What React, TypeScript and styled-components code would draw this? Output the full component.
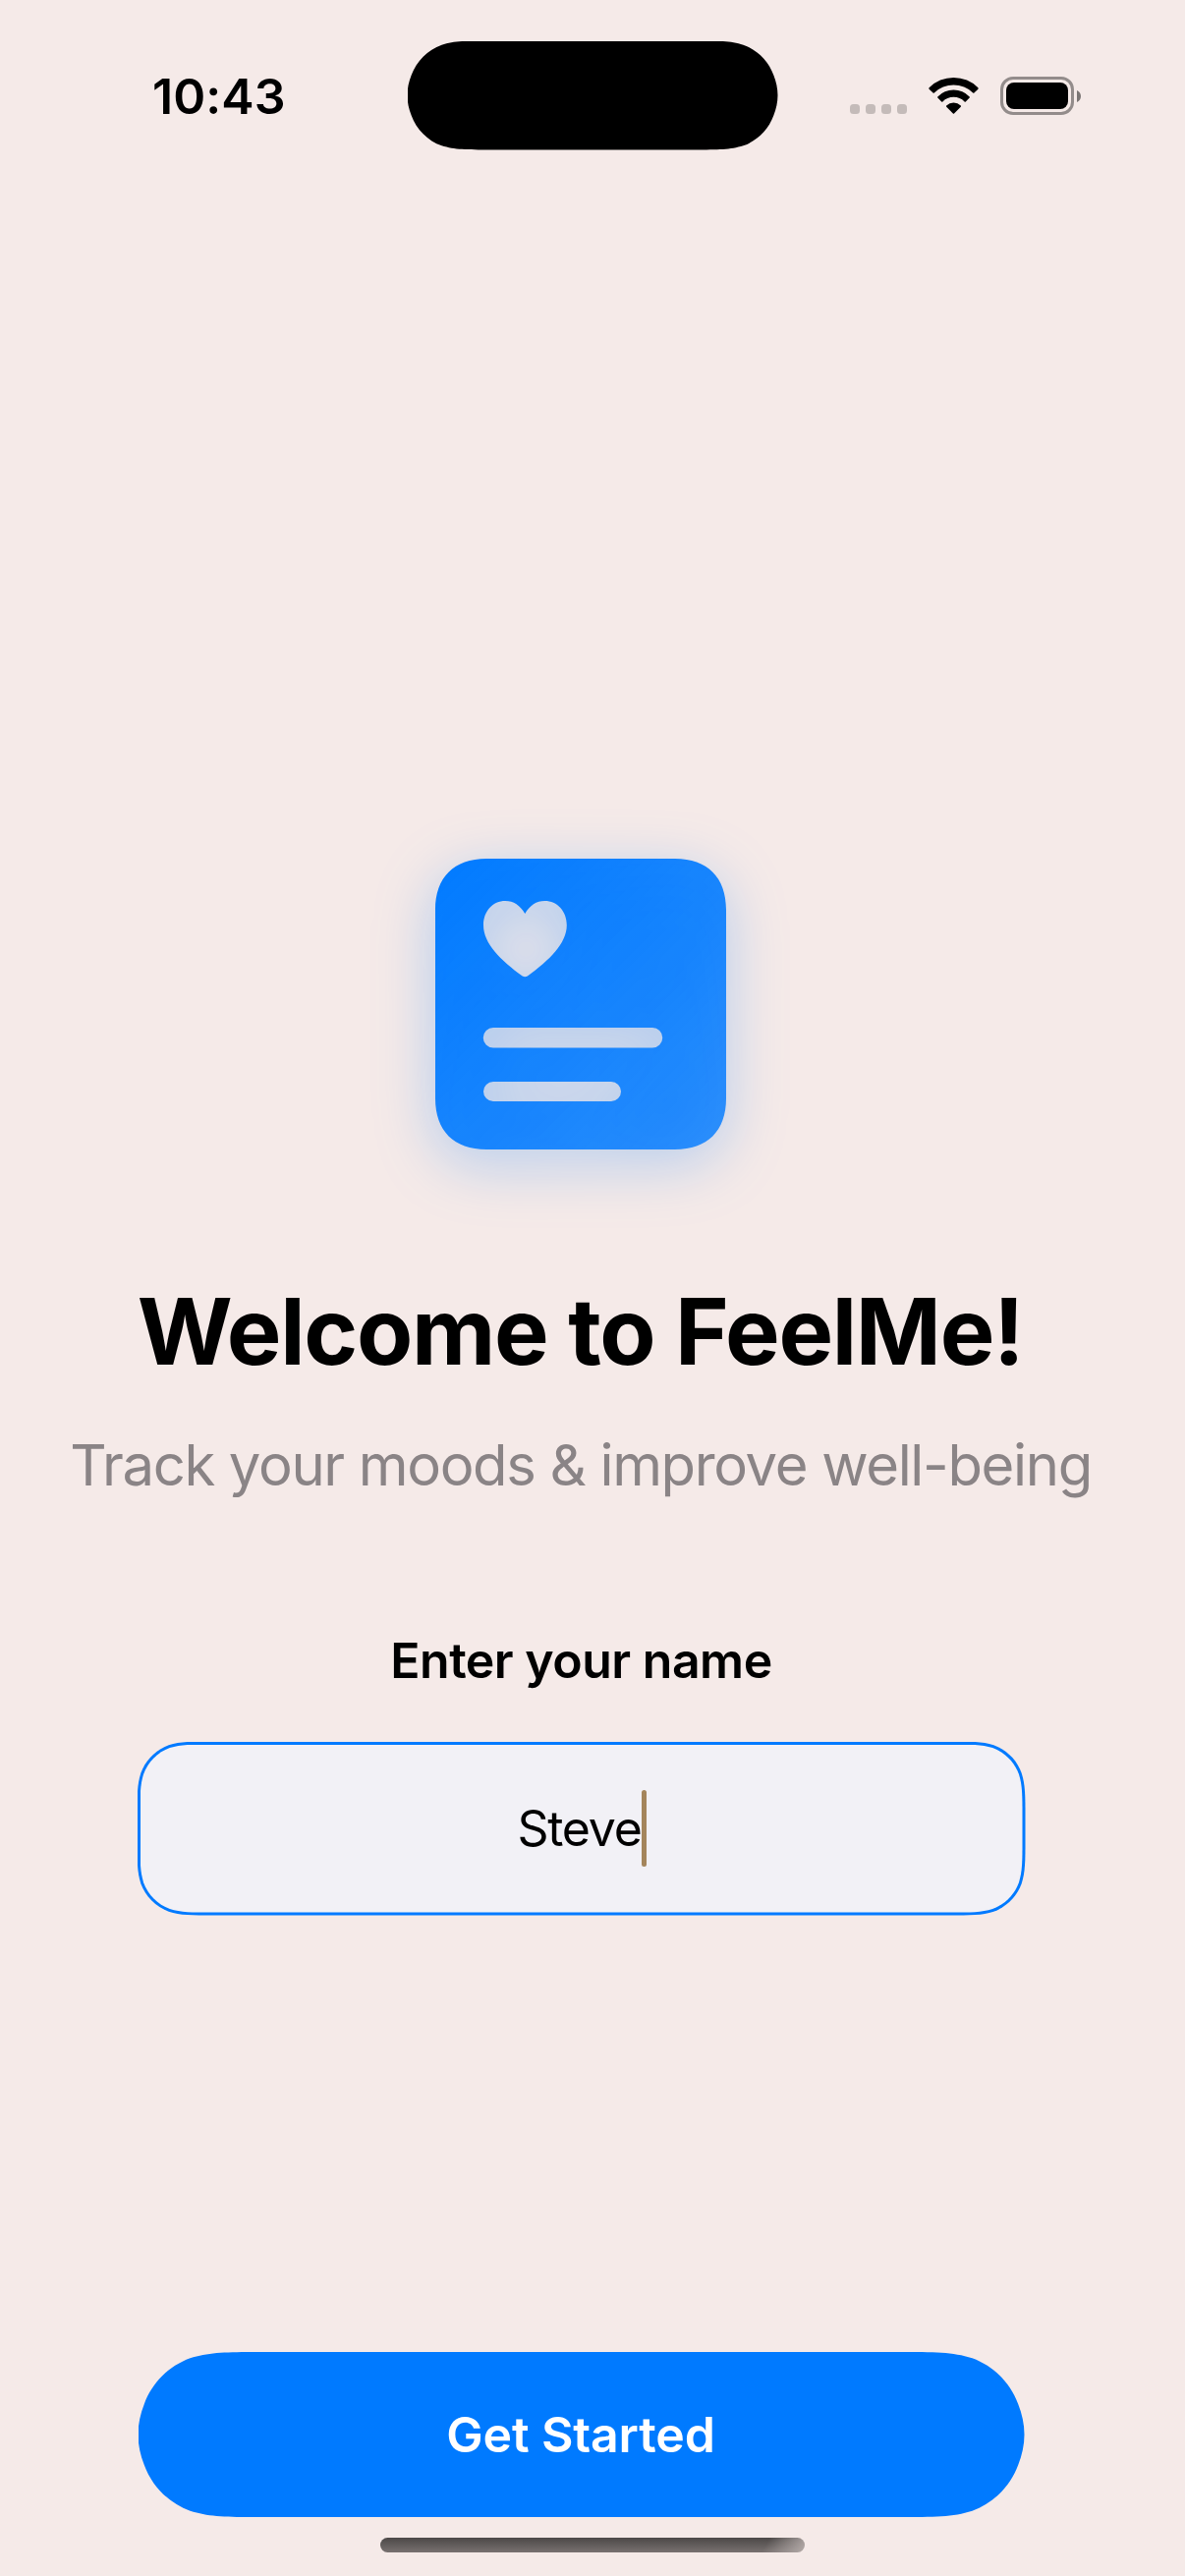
import React from 'react';
import styled, { createGlobalStyle } from 'styled-components';

const FONT = `Inter, "Liberation Sans", sans-serif`;
const BACKGROUND = '#f5eae8';
const ACCENT = '#007aff';

/** Outline of a rectangle with continuous (superelliptic) corners. */
function continuousRect(w: number, h: number, r: number): string {
  const capsule = h < 2 * 1.528665 * r;
  const ex = 1.528665 * r;
  const ey = capsule ? h / 2 : 1.528665 * r;
  const p = capsule ? 0.0285 * r : 0;
  const a = 0.8684 * r;
  const ay = capsule ? 0.749 * r : a;
  const cx = 1.08849 * r;
  const cy = capsule ? 0.874 * r : 1.08849 * r;
  const b = 0.63149 * r;
  const c = 0.07491 * r;
  const d = 0.37282 * r;
  const e = 0.16906 * r;
  return [
    `M${ex} 0H${w - ex}`,
    `C${w - cx} 0 ${w - a} 0 ${w - b} ${c}`,
    `C${w - d} ${e} ${w - e} ${d} ${w - c} ${b}`,
    `C${w - p} ${ay} ${w} ${cy} ${w} ${ey}`,
    `V${h - ey}`,
    `C${w} ${h - cy} ${w - p} ${h - ay} ${w - c} ${h - b}`,
    `C${w - e} ${h - d} ${w - d} ${h - e} ${w - b} ${h - c}`,
    `C${w - a} ${h} ${w - cx} ${h} ${w - ex} ${h}`,
    `H${ex}`,
    `C${cx} ${h} ${a} ${h} ${b} ${h - c}`,
    `C${d} ${h - e} ${e} ${h - d} ${c} ${h - b}`,
    `C${p} ${h - ay} 0 ${h - cy} 0 ${h - ey}`,
    `V${ey}`,
    `C0 ${cy} ${p} ${ay} ${c} ${b}`,
    `C${e} ${d} ${d} ${e} ${b} ${c}`,
    `C${a} 0 ${cx} 0 ${ex} 0Z`,
  ].join('');
}

const GlobalStyle = createGlobalStyle`
  * { box-sizing: border-box; }
  html, body { margin: 0; padding: 0; background: ${BACKGROUND}; }
`;

const Screen = styled.div`
  width: 1206px;
  height: 2622px;
  display: flex;
  flex-direction: column;
  overflow: hidden;
  background: ${BACKGROUND};
  color: #000;
  font-family: ${FONT};
`;

const StatusBar = styled.header`
  flex: none;
  display: grid;
  grid-template-columns: 414px 378px 414px;
  align-items: center;
  height: 195px;
`;

const Clock = styled.time`
  padding-left: 155px;
  font-size: 50px;
  line-height: 60px;
  font-weight: 600;
  letter-spacing: 0.1px;
`;

const Island = styled.div`
  justify-self: center;
  width: 377px;
  height: 111px;
  margin-bottom: 1px;
  background: #000;
  clip-path: path('${continuousRect(377, 111, 55.5)}');
`;

const StatusIcons = styled.div`
  display: flex;
  align-items: center;
  gap: 22px;
  padding-left: 73px;
`;

const Signal = styled.div`
  display: flex;
  gap: 6px;
  padding-top: 27px;
`;

const SignalDot = styled.span`
  width: 10px;
  height: 10px;
  border-radius: 3.5px;
  background: rgba(0, 0, 0, 0.2);
`;

const WifiGlyph = styled.svg`
  overflow: visible;
`;

const Battery = styled.div`
  display: flex;
  align-items: center;
  gap: 3px;
`;

const BatteryCase = styled.div`
  width: 75px;
  height: 39px;
  padding: 3px;
  border: 3px solid rgba(0, 0, 0, 0.4);
  border-radius: 13px;
`;

const BatteryLevel = styled.div`
  height: 100%;
  border-radius: 8px;
  background: #000;
`;

const Welcome = styled.main`
  flex: 1;
  display: flex;
  flex-direction: column;
  align-items: center;
  width: 1182px;
  padding-top: 679px;
`;

const AppIcon = styled.svg`
  display: block;
  flex: none;
  overflow: visible;
  filter: drop-shadow(0 15px 30px rgba(0, 122, 255, 0.3));
`;

const Title = styled.h1`
  margin: 129px 1px 0 0;
  font-size: 93.5px;
  line-height: 112px;
  font-weight: 700;
  letter-spacing: -1.3px;
  white-space: nowrap;
`;

const Subtitle = styled.p`
  margin: 45px 0 0;
  font-size: 58px;
  line-height: 70px;
  font-weight: 400;
  letter-spacing: -1.35px;
  color: #8a8486;
  white-space: nowrap;
`;

const FieldLabel = styled.label`
  margin: 134px 0 0 1px;
  font-size: 50px;
  line-height: 60px;
  font-weight: 600;
  letter-spacing: -0.5px;
`;

const FieldFrame = styled.div`
  flex: none;
  width: 904px;
  height: 177px;
  margin: 52.5px 0 0 1px;
  padding: 3px;
  background: ${ACCENT};
  clip-path: path('${continuousRect(904, 177, 51)}');
`;

const Field = styled.div`
  display: flex;
  align-items: center;
  justify-content: center;
  height: 171px;
  background: #f2f1f6;
  clip-path: path('${continuousRect(898, 171, 48)}');
`;

const FieldValue = styled.span`
  position: relative;
  margin-right: 4px;
  font-size: 50px;
  line-height: 60px;
  letter-spacing: -1.25px;
`;

const Caret = styled.span`
  position: absolute;
  left: 100%;
  top: -9px;
  width: 5.5px;
  height: 78px;
  border-radius: 3px;
  background: #a4855c;
`;

const StartButton = styled.button`
  flex: none;
  width: 902px;
  height: 168px;
  margin: auto 0 21px 1px;
  padding: 0 1px 0 0;
  border: 0;
  background: ${ACCENT};
  clip-path: path('${continuousRect(902, 168, 84)}');
  color: #fff;
  font-family: inherit;
  font-size: 50px;
  line-height: 60px;
  font-weight: 600;
  letter-spacing: -0.15px;
`;

const HomeIndicator = styled.div`
  flex: none;
  align-self: center;
  width: 432px;
  height: 15px;
  margin-bottom: 24px;
  border-radius: 8px;
  background:
    linear-gradient(120deg, rgba(176, 167, 165, 0) 90%, rgba(176, 167, 165, 0.95) 99%),
    linear-gradient(#4c4847, #787170);
`;

const CARD =
  'M52 0H244C277 0 296 19 296 52V244C296 277 277 296 244 296H52C19 296 0 277 0 244V52C0 19 19 0 52 0Z' +
  'M91.3 56C86.5 47.5 79.5 43 71.3 43C58.5 43 49 53.5 49 67.7C49 86 66.5 103.5 88.7 119.4Q91.3 121 93.9 119.4C116.1 103.5 133.8 86 133.8 67.7C133.8 53.5 124.2 43 111.3 43C103.2 43 96 47.5 91.3 56Z' +
  'M59 172H221A10 10 0 0 1 221 192.5H59A10 10 0 0 1 59 172Z' +
  'M59 227H179A10 10 0 0 1 179 247H59A10 10 0 0 1 59 227Z';

function WifiIcon() {
  return (
    <WifiGlyph width="51" height="37" viewBox="0 0 51 37" fill="#000">
      <path d="M0.6 10.3A35 35 0 0 1 50.4 10.3Q51 11 50.4 11.7L46.4 15.4Q45.8 15.9 45.2 15.4A28.5 28.5 0 0 0 5.8 15.4Q5.2 15.9 4.6 15.4L0.6 11.7Q0 11 0.6 10.3Z" />
      <path d="M9.3 19.4A22.3 22.3 0 0 1 41.7 19.4Q42.2 20 41.7 20.6L37.8 24.4Q37.2 24.9 36.6 24.4A15.6 15.6 0 0 0 14.4 24.4Q13.8 24.9 13.2 24.4L9.3 20.6Q8.8 20 9.3 19.4Z" />
      <path d="M18.2 28.6A10.3 10.3 0 0 1 32.8 28.6Q33.3 29.2 32.8 29.8L26.1 36.6Q25.5 37.1 24.9 36.6L18.2 29.8Q17.7 29.2 18.2 28.6Z" />
    </WifiGlyph>
  );
}

export default function App() {
  return (
    <>
      <GlobalStyle />
      <Screen>
        <StatusBar>
          <Clock>10:43</Clock>
          <Island />
          <StatusIcons>
            <Signal>
              <SignalDot />
              <SignalDot />
              <SignalDot />
              <SignalDot />
            </Signal>
            <WifiIcon />
            <Battery>
              <BatteryCase>
                <BatteryLevel />
              </BatteryCase>
              <svg width="4" height="12" viewBox="0 0 4 12">
                <path d="M0 0C2.4 1 4 3.3 4 6S2.4 11 0 12Z" fill="#000" fillOpacity="0.5" />
              </svg>
            </Battery>
          </StatusIcons>
        </StatusBar>
        <Welcome>
          <AppIcon width="296" height="296" viewBox="0 0 296 296">
            <defs>
              <linearGradient id="card" x1="0" y1="0" x2="1" y2="1">
                <stop offset="0" stopColor={ACCENT} />
                <stop offset="1" stopColor={ACCENT} stopOpacity="0.8" />
              </linearGradient>
            </defs>
            <path d={CARD} fill="url(#card)" fillRule="evenodd" />
          </AppIcon>
          <Title>Welcome to FeelMe!</Title>
          <Subtitle>Track your moods &amp; improve well-being</Subtitle>
          <FieldLabel>Enter your name</FieldLabel>
          <FieldFrame>
            <Field>
              <FieldValue>
                Steve
                <Caret />
              </FieldValue>
            </Field>
          </FieldFrame>
          <StartButton type="button">Get Started</StartButton>
        </Welcome>
        <HomeIndicator />
      </Screen>
    </>
  );
}
